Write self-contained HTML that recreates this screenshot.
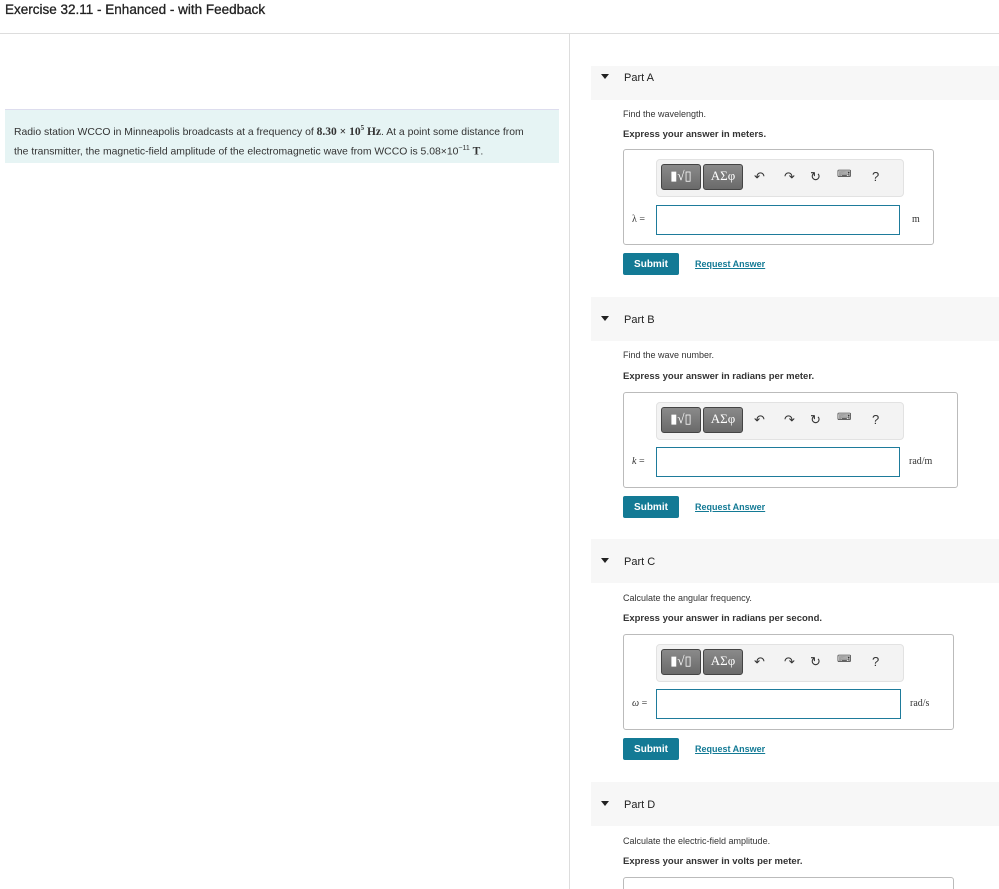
<!DOCTYPE html>
<html style="height:889px;overflow:hidden"><head><style>
body{margin:0;width:999px;height:889px;overflow:hidden;background:#fff;font-family:"Liberation Sans",Arial,sans-serif;position:relative;color:#333}
.a{position:absolute}
.band{position:absolute;left:591px;width:408px;background:#f7f7f7}
.tri{position:absolute;left:601px;width:0;height:0;border-left:4px solid transparent;border-right:4px solid transparent;border-top:5px solid #222}
.pt{position:absolute;left:624px;font-size:11px;color:#222}
.q{position:absolute;left:623px;font-size:9px;color:#333}
.e{position:absolute;left:623px;font-size:9.5px;font-weight:bold;color:#333}
.box{position:absolute;left:623px;width:309px;height:94px;border:1px solid #bbb;border-radius:3px}
.tb{position:absolute;left:32px;top:9px;width:246px;height:36px;background:#f3f3f3;border:1px solid #e2e2e2;border-radius:4px}
.btn{position:absolute;top:4px;height:24px;background:linear-gradient(#8a8a8a,#6a6a6a);border:1px solid #444;border-radius:3px;color:#fff;font-family:"Liberation Serif",serif;font-size:13px;text-align:center;line-height:22px}
.ic{position:absolute;top:9px;font-size:13px;color:#333}
.inp{position:absolute;left:32px;width:242px;height:28px;border:1px solid #1e7b9b}
.lab{position:absolute;left:8px;font-size:10px;color:#333;font-family:"Liberation Serif",serif}
.unit{position:absolute;font-family:"Liberation Serif",serif;font-size:10px;color:#333}
.sub{position:absolute;left:623px;width:56px;height:22px;background:#137a95;color:#fff;font-size:10px;font-weight:bold;text-align:center;line-height:24px;border-radius:2px}
.req{position:absolute;left:695px;font-size:9px;color:#137a95;text-decoration:underline;font-weight:bold}
</style></head><body>
<div class="a" style="left:5px;top:2px;font-size:13.5px;color:#222;-webkit-text-stroke:0.3px #222">Exercise 32.11 - Enhanced - with Feedback</div>
<div class="a" style="left:0;top:33px;width:999px;height:1px;background:#ddd"></div>
<div class="a" style="left:569px;top:34px;width:1px;height:855px;background:#ddd"></div>
<div class="a" style="left:5px;top:109px;width:554px;height:53px;background:#e6f4f4;border-top:1px solid #dde"></div>
<div class="a" style="left:14px;top:120px;font-size:10.4px;line-height:16px;color:#333;width:545px;white-space:nowrap">Radio station WCCO in Minneapolis broadcasts at a frequency of <b style="font-family:'Liberation Serif',serif;font-size:11.5px">8.30 × 10<sup style="font-size:7px">5</sup> Hz</b>. At a point some distance from<br>the transmitter, the magnetic-field amplitude of the electromagnetic wave from WCCO is 5.08×10<sup style="font-size:7px">−11</sup> <b style="font-family:'Liberation Serif',serif;font-size:11.5px">T</b>.</div>

<!-- Part A -->
<div class="band" style="top:66px;height:34px"></div><div class="tri" style="top:74px"></div><div class="pt" style="top:72px">Part A</div>
<div class="q" style="top:109px">Find the wavelength.</div>
<div class="e" style="top:129px">Express your answer in meters.</div>
<div class="box" style="top:149px">
 <div class="tb"><div class="btn" style="left:4px;width:38px">▮√▯</div><div class="btn" style="left:46px;width:38px">ΑΣφ</div>
 <div class="ic" style="left:97px">↶</div><div class="ic" style="left:127px">↷</div><div class="ic" style="left:153px">↻</div><div class="ic" style="left:180px;font-size:10px">⌨</div><div class="ic" style="left:215px">?</div></div>
 <div class="inp" style="top:55px"></div><div class="lab" style="top:64px">λ =</div><div class="unit" style="left:288px;top:64px">m</div>
</div>
<div class="sub" style="top:253px">Submit</div><div class="req" style="top:259px">Request Answer</div>

<!-- Part B -->
<div class="band" style="top:297px;height:44px"></div><div class="tri" style="top:316px"></div><div class="pt" style="top:314px">Part B</div>
<div class="q" style="top:350px">Find the wave number.</div>
<div class="e" style="top:371px">Express your answer in radians per meter.</div>
<div class="box" style="top:392px;width:333px">
 <div class="tb"><div class="btn" style="left:4px;width:38px">▮√▯</div><div class="btn" style="left:46px;width:38px">ΑΣφ</div>
 <div class="ic" style="left:97px">↶</div><div class="ic" style="left:127px">↷</div><div class="ic" style="left:153px">↻</div><div class="ic" style="left:180px;font-size:10px">⌨</div><div class="ic" style="left:215px">?</div></div>
 <div class="inp" style="top:54px"></div><div class="lab" style="top:63px"><i>k</i> =</div><div class="unit" style="left:285px;top:63px">rad/m</div>
</div>
<div class="sub" style="top:496px">Submit</div><div class="req" style="top:502px">Request Answer</div>

<!-- Part C -->
<div class="band" style="top:539px;height:44px"></div><div class="tri" style="top:558px"></div><div class="pt" style="top:556px">Part C</div>
<div class="q" style="top:593px">Calculate the angular frequency.</div>
<div class="e" style="top:613px">Express your answer in radians per second.</div>
<div class="box" style="top:634px;width:329px">
 <div class="tb"><div class="btn" style="left:4px;width:38px">▮√▯</div><div class="btn" style="left:46px;width:38px">ΑΣφ</div>
 <div class="ic" style="left:97px">↶</div><div class="ic" style="left:127px">↷</div><div class="ic" style="left:153px">↻</div><div class="ic" style="left:180px;font-size:10px">⌨</div><div class="ic" style="left:215px">?</div></div>
 <div class="inp" style="top:54px;width:243px"></div><div class="lab" style="top:63px"><i>ω</i> =</div><div class="unit" style="left:286px;top:63px">rad/s</div>
</div>
<div class="sub" style="top:738px">Submit</div><div class="req" style="top:744px">Request Answer</div>

<!-- Part D -->
<div class="band" style="top:782px;height:44px"></div><div class="tri" style="top:801px"></div><div class="pt" style="top:799px">Part D</div>
<div class="q" style="top:836px">Calculate the electric-field amplitude.</div>
<div class="e" style="top:856px">Express your answer in volts per meter.</div>
<div class="box" style="top:877px;width:329px;height:40px"></div>
</body></html>
